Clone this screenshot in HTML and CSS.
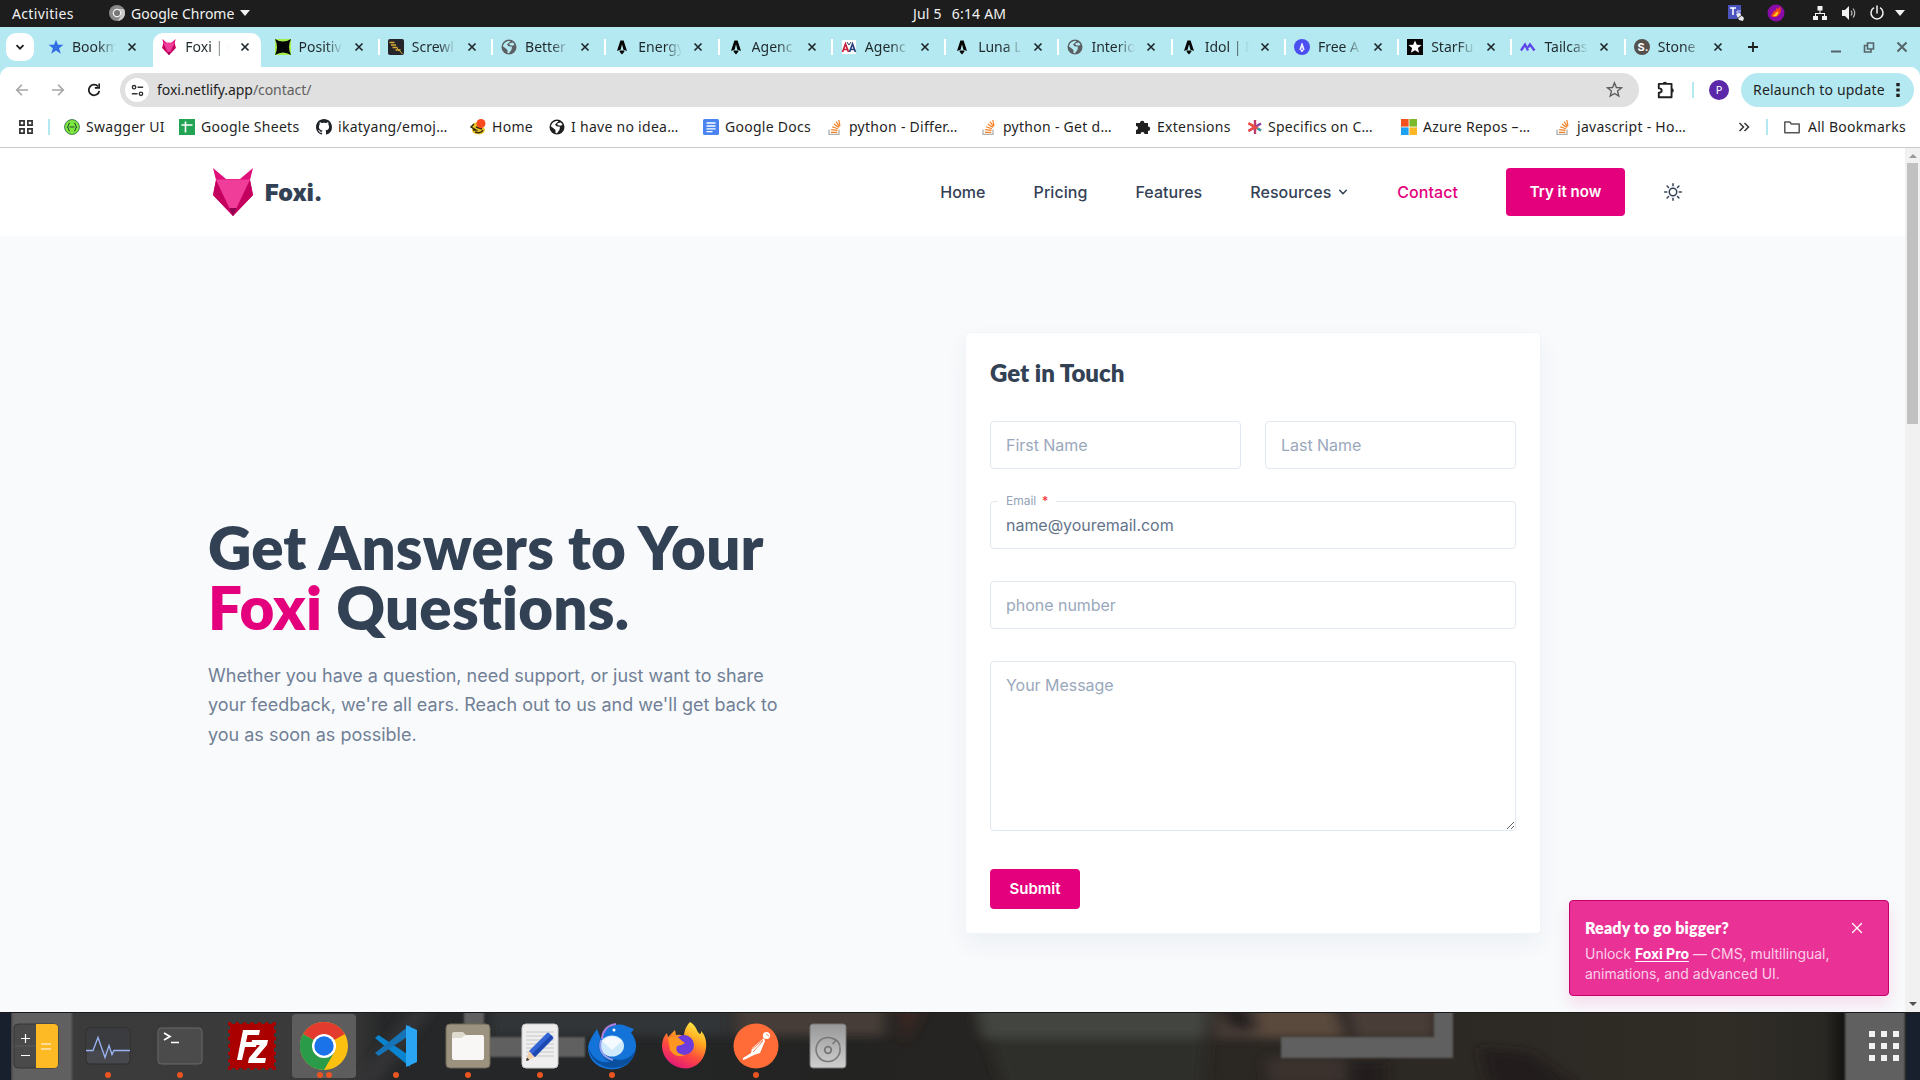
FILE: index.html
```html
<!DOCTYPE html>
<html lang="en">
<head>
<meta charset="utf-8">
<title>Foxi | Contact</title>
<link rel="stylesheet" href="styles.css">
</head>
<body>
<svg class="sprite" aria-hidden="true">
  <symbol id="close" viewBox="0 0 16 16"><path d="M4.500 4.500l7 7M11.500 4.500l-7 7" stroke="currentColor" stroke-width="1.700" fill="none"/></symbol>
  <symbol id="fox" viewBox="0 0 40 48">
    <path d="M0 0l13 11H27L40 0l-3 12 3 15-20 21L0 27l3-15z" fill="#e0107a"/>
    <path d="M3 12L0 27l20 21 20-21-3-15-20 30z" fill="#c4005f"/>
    <path d="M3 11.500h34L23.500 40h-7z" fill="#f03d9a"/>
    <path d="M16.500 40h7L20 48z" fill="#8f0050"/>
  </symbol>
  <symbol id="globe" viewBox="0 0 16 16"><circle cx="8" cy="8" r="7.500" fill="currentColor"/><path d="M9.500 2.200L6 5.500l1.500 1.800 3.500.5-.5 3-2.500 3.500-1.500-.3V11L3.500 8.500 2 7.600C2.200 4.500 5.500 1.500 9.500 2.200z" fill="var(--cut)"/><path d="M8.500 4.200l3.500-.7 1.500 2.300-2 .9-3-.7z" fill="var(--cut)"/></symbol>
  <symbol id="astro" viewBox="0 0 16 16"><path d="M6.400 1.500h3.200L13 12c-1.200-.7-2.600-1.100-3.600-1.300L8 5.200l-1.400 5.500C5.600 10.900 4.200 11.300 3 12z" fill="#050505"/><path d="M5.500 11.500h5c0 2-1.300 2.300-2.500 4-1.200-1.700-2.500-2-2.500-4z" fill="#050505"/></symbol>
  <symbol id="stack" viewBox="0 0 16 16"><path d="M2 10.500v5h10v-5" fill="none" stroke="#b0b0b0" stroke-width="1.300"/><path d="M4 13.300h6.300M4.200 10.600l6.200.7M5 7.800l5.900 1.900M6.800 4.900l5 3.700M9 2.600l3.500 5M11.800 1l1.200 6" stroke="#f48024" stroke-width="1.200" fill="none"/></symbol>
</svg>

<div class="topbar">
  <span class="activities">Activities</span>
  <svg class="app-icon" viewBox="0 0 16 16"><circle cx="8" cy="8" r="8" fill="#8a8a8a"/><path d="M8 4h7a8 8 0 01-6 11.900l3-6z" fill="#c9c9c9"/><circle cx="8" cy="8" r="3.700" fill="#777" stroke="#f2f2f2" stroke-width="1.200"/></svg>
  <span class="app-name">Google Chrome</span>
  <svg class="caret" viewBox="0 0 10 6"><path d="M0 0h10L5 6z" fill="#f2f2f2"/></svg>
  <div class="clock"><span>Jul 5</span><span>6:14 AM</span></div>
  <div class="tray">
    <svg viewBox="0 0 18 18"><path d="M1 1h13v14H1z" fill="#4b53bc"/><path d="M3 4h6M6 4v7" stroke="#fff" stroke-width="1.600"/><path d="M10 7h4M10 7v2h3v3" stroke="#c9ccff" fill="none"/><path d="M9 10l3-1 5 5-1 3-4-1z" fill="#e8e8e8"/><path d="M10 15l5-4" stroke="#333"/></svg>
    <svg viewBox="0 0 18 18"><circle cx="9" cy="9" r="8.500" fill="#8a0ca8"/><path d="M4 12c1-3 2-2 3-6 1 3 2 0 3-3 1 3 1 3 3-1 2 6 0 9-4 11-2 0-4 0-5-1z" fill="#f6441e"/><path d="M6 12c1-2 2-1 3-4 1 1 1 0 2-1 1 4-2 6-5 5z" fill="#ffc91f"/></svg>
    <svg viewBox="0 0 18 18"><path d="M6.500 2h5v4.500h-5zM2 12h5v4H2zM11 12h5v4h-5zM8.500 6h1v3h-1zM4 9h10v1H4zM4 9h1v3H4zM13 9h1v3h-1z" fill="#f2f2f2"/></svg>
    <svg viewBox="0 0 18 18"><path d="M2 6h3l4-4v14l-4-4H2z" fill="#f2f2f2"/><path d="M11 6.500q2 2.500 0 5M13 4.500q3.500 4.500 0 9" stroke="#bbb" fill="none" stroke-width="1.200"/></svg>
    <svg viewBox="0 0 18 18"><path d="M6 3.700a6 6 0 106 0M9 1.500v8" stroke="#f2f2f2" fill="none" stroke-width="1.500"/></svg>
    <svg viewBox="0 0 18 18"><path d="M4 6h10l-5 6z" fill="#f2f2f2"/></svg>
  </div>
</div>

<div class="tabstrip">
  <div class="tabsearch"><svg viewBox="0 0 16 16"><path d="M4.500 6.200L8 9.700l3.500-3.500" fill="none" stroke="#1f1f1f" stroke-width="1.800"/></svg></div>
  <div class="tabs">
    <div class="tab plain"><svg viewBox="0 0 16 16"><path d="M8 .8l2 5h5.500l-4.400 3.500 1.700 5.500L8 11.500l-4.800 3.300 1.700-5.500L.5 5.800H6z" fill="#2f6fe4"/></svg><span>Bookm</span><svg><use href="#close"/></svg></div>
    <div class="tab active"><svg><use href="#fox"/></svg><span>Foxi | C</span><svg><use href="#close"/></svg></div>
    <div class="tab plain"><svg viewBox="0 0 16 16"><path d="M0 0h16v16H0z" fill="#a4ee4b"/><path d="M0 0q8 5 16 0-4 8 0 16-8-5-16 0 4-8 0-16z" fill="#050505"/></svg><span>Positiv</span><svg><use href="#close"/></svg></div>
    <div class="tab"><svg viewBox="0 0 16 16"><rect width="16" height="16" rx="2" fill="#25252b"/><path d="M1.500 3.500h5M3 6h5M4.500 8.500h5M7.500 11h5" stroke="#d9ad35" stroke-width="1.500"/><path d="M9 9l5.500 6" stroke="#d9ad35"/></svg><span>Screwl</span><svg><use href="#close"/></svg></div>
    <div class="tab grey"><svg><use href="#globe"/></svg><span>Better</span><svg><use href="#close"/></svg></div>
    <div class="tab"><svg><use href="#astro"/></svg><span>Energy</span><svg><use href="#close"/></svg></div>
    <div class="tab"><svg><use href="#astro"/></svg><span>Agenc</span><svg><use href="#close"/></svg></div>
    <div class="tab"><svg viewBox="0 0 16 16"><path d="M1 1h14v14H1z" fill="#fff"/><path d="M1.500 13L4.500 5l3 8M3 10.500h3.500" stroke="#c8203a" stroke-width="1.700" fill="none"/><path d="M8.500 13l3-8 3 8M9.500 10.500H13" stroke="#28417c" stroke-width="1.700" fill="none"/><path d="M6 3l2 3 2-3" stroke="#28417c" fill="none"/></svg><span>Agenc</span><svg><use href="#close"/></svg></div>
    <div class="tab"><svg><use href="#astro"/></svg><span>Luna L</span><svg><use href="#close"/></svg></div>
    <div class="tab grey"><svg><use href="#globe"/></svg><span>Interio</span><svg><use href="#close"/></svg></div>
    <div class="tab"><svg><use href="#astro"/></svg><span>Idol | M</span><svg><use href="#close"/></svg></div>
    <div class="tab"><svg viewBox="0 0 16 16"><circle cx="8" cy="8" r="8" fill="#4b4ff0"/><path d="M8 4l2.300 6.500H9.200L8 7l-1.200 3.500H5.700zM6.700 11h2.600L8 13z" fill="#fff" stroke="#fff" stroke-width=".6"/></svg><span>Free A</span><svg><use href="#close"/></svg></div>
    <div class="tab"><svg viewBox="0 0 16 16"><path d="M0 0h16v16H0z" fill="#050505"/><path d="M8 1.500l1.800 4.300 4.700.3-3.600 3 1.200 4.600L8 11.200l-4.100 2.500 1.200-4.600-3.600-3 4.700-.3z" fill="#fff"/></svg><span>StarFu</span><svg><use href="#close"/></svg></div>
    <div class="tab"><svg viewBox="0 0 16 16"><path d="M1 11.500L5 5.500l3 6M8 8.500l2-3 4.500 6" stroke="#5d45e8" stroke-width="2.300" fill="none"/></svg><span>Tailcas</span><svg><use href="#close"/></svg></div>
    <div class="tab"><svg viewBox="0 0 16 16"><circle cx="8" cy="8" r="8" fill="#55504c"/><text x="3.600" y="12" class="s-mark">S.</text></svg><span>Stone</span><svg><use href="#close"/></svg></div>
  </div>
  <div class="newtab"><svg viewBox="0 0 16 16"><path d="M8 3v10M3 8h10" stroke="#1f1f1f" stroke-width="1.800"/></svg></div>
  <div class="wincontrols">
    <svg viewBox="0 0 16 16"><path d="M3 12.500h10" stroke="#56646a" stroke-width="2"/></svg>
    <svg viewBox="0 0 16 16"><path d="M6.500 4h6v6h-6zM6 6.500H3.500V13H10v-2.500" fill="none" stroke="#56646a" stroke-width="1.600"/></svg>
    <svg viewBox="0 0 16 16"><path d="M3.500 3.500l9 9M12.500 3.500l-9 9" stroke="#56646a" stroke-width="2"/></svg>
  </div>
</div>

<div class="toolbar">
  <div class="navbtns">
    <svg viewBox="0 0 16 16"><path d="M14 8H3M8 2.700L2.700 8 8 13.300" stroke="#a5a5a5" stroke-width="1.600" fill="none"/></svg>
    <svg viewBox="0 0 16 16"><path d="M2 8h11M8 2.700L13.300 8 8 13.300" stroke="#a5a5a5" stroke-width="1.600" fill="none"/></svg>
    <svg viewBox="0 0 16 16"><path d="M13.300 8.800A5.300 5.300 0 1112 4.400" stroke="#1f1f1f" stroke-width="1.800" fill="none"/><path d="M14 1.500v5.200H8.800V5.100h3.600V1.500z" fill="#1f1f1f"/></svg>
  </div>
  <div class="omnibox">
    <div class="siteinfo"><svg viewBox="0 0 16 16"><path d="M8 4.500h6M2 11.500h6" stroke="#333" stroke-width="1.600"/><circle cx="4.300" cy="4.500" r="1.800" fill="none" stroke="#333" stroke-width="1.500"/><circle cx="11.700" cy="11.500" r="1.800" fill="none" stroke="#333" stroke-width="1.500"/></svg></div>
    <span class="url">foxi.netlify.app<i>/contact/</i></span>
    <svg class="bm-star" viewBox="0 0 16 16"><path d="M8 1.800l1.800 4.300 4.700.4-3.600 3 1.100 4.600L8 11.700l-4 2.400 1.100-4.600-3.600-3 4.700-.4z" fill="none" stroke="#5c5c5c" stroke-width="1.300"/></svg>
  </div>
  <svg class="puzzle" viewBox="0 0 18 18"><path d="M2.500 3.500H14v12H2.500v-4c3.500 0 3.500-4 0-4z" fill="none" stroke="#1f1f1f" stroke-width="1.700" stroke-linejoin="round"/><path d="M6 3.500a2 2 0 014 0zM14 7.500a2 2 0 010 4z" fill="#1f1f1f"/></svg>
  <span class="divider"></span>
  <span class="avatar">P</span>
  <div class="relaunch"><span>Relaunch to update</span><svg viewBox="0 0 4 16"><path d="M.3 1h3.400v3.200H.3zM.3 6.400h3.400v3.200H.3zM.3 11.800h3.400V15H.3z" fill="#1f1f1f"/></svg></div>
</div>

<div class="bookmarks">
  <svg class="apps" viewBox="0 0 16 16"><path d="M1.900 1.900h4.200v4.200H1.900zM9.900 1.900h4.200v4.200H9.900zM1.900 9.900h4.200v4.200H1.900zM9.900 9.900h4.200v4.200H9.900z" fill="none" stroke="#333" stroke-width="1.700"/></svg>
  <span class="divider"></span>
  <div class="bm-list">
    <div class="bm"><svg viewBox="0 0 16 16"><circle cx="8" cy="8" r="7.400" fill="#7ee83c" stroke="#3f7a55"/><path d="M6 4q-1.500 0-1.500 2T3 8q1.500 0 1.500 2T6 12M10 4q1.500 0 1.500 2T13 8q-1.500 0-1.500 2T10 12M5.500 8h5" fill="none" stroke="#234b38"/></svg><span>Swagger UI</span></div>
    <div class="bm"><svg viewBox="0 0 16 16"><path d="M0 0h16v16H0z" fill="#23a455"/><path d="M2.500 6h11M6.500 2.500v11" stroke="#fff" stroke-width="1.600"/></svg><span>Google Sheets</span></div>
    <div class="bm"><svg viewBox="0 0 16 16"><path fill="#1f2328" d="M8 0C3.580 0 0 3.580 0 8c0 3.540 2.290 6.530 5.470 7.590.4.070.55-.17.55-.38 0-.19-.01-.82-.01-1.490-2.010.37-2.530-.49-2.690-.94-.09-.23-.48-.94-.82-1.130-.28-.15-.68-.52-.01-.53.63-.01 1.080.58 1.230.82.720 1.210 1.870.87 2.330.66.070-.52.28-.87.51-1.070-1.780-.2-3.640-.89-3.640-3.950 0-.87.31-1.590.82-2.150-.08-.2-.36-1.020.08-2.120 0 0 .67-.21 2.200.82.640-.18 1.320-.27 2-.27s1.360.09 2 .27c1.530-1.040 2.200-.82 2.200-.82.440 1.100.16 1.920.08 2.120.51.560.82 1.270.82 2.150 0 3.070-1.870 3.750-3.650 3.950.29.250.54.730.54 1.480 0 1.070-.01 1.930-.01 2.200 0 .21.15.46.55.38A8.010 8.010 0 0016 8c0-4.420-3.580-8-8-8z"/></svg><span>ikatyang/emoj…</span></div>
    <div class="bm"><svg viewBox="0 0 16 16"><path d="M2 6Q6 1 10 5l5 5q0 5-6 5.500Q1 15 2 10z" fill="#e9c62a"/><path d="M4 5L1 8l5 3H3M5 13q6 2 8-2M6 8l6 2" fill="none" stroke="#33290e" stroke-width="1.400"/><circle cx="11" cy="4.500" r="4.500" fill="#fb4b1e"/></svg><span>Home</span></div>
    <div class="bm dark"><svg><use href="#globe"/></svg><span>I have no idea…</span></div>
    <div class="bm"><svg viewBox="0 0 16 16"><rect width="16" height="16" rx="1.500" fill="#4b84f1"/><path d="M3.500 4h9M3.500 7h9M3.500 9.900h9M3.500 12.600h6" stroke="#fff" stroke-width="1.400"/></svg><span>Google Docs</span></div>
    <div class="bm"><svg><use href="#stack"/></svg><span>python - Differ…</span></div>
    <div class="bm"><svg><use href="#stack"/></svg><span>python - Get d…</span></div>
    <div class="bm"><svg viewBox="0 0 16 16"><path d="M1 4h4a2.200 2.200 0 114.400 0H13v3.600a2.200 2.200 0 110 4.400v3H9.500a2 2 0 10-4 0H1v-4a2 2 0 100-4z" fill="#1f1f1f"/></svg><span>Extensions</span></div>
    <div class="bm"><svg viewBox="0 0 16 16"><path d="M9 1v14" stroke="#c23a6b" stroke-width="2.400"/><path d="M2.500 4.200L9 8 15 11.500" stroke="#e8562b" stroke-width="2.400"/><path d="M15 4.500L9 8l-6.500 4" stroke="#8f3fa0" stroke-width="2.400"/><path d="M2.500 4.200L9 8l-6.500 4" stroke="#ee4b45" stroke-width="2.400" fill="none"/><path d="M11.500 9.500L15 11.500" stroke="#28a6b5" stroke-width="2.400"/></svg><span>Specifics on C…</span></div>
    <div class="bm"><svg viewBox="0 0 16 16"><path d="M0 0h7.600v7.600H0z" fill="#f4511e"/><path d="M8.400 0H16v7.600H8.400z" fill="#7cb928"/><path d="M0 8.400h7.600V16H0z" fill="#1da1f2"/><path d="M8.400 8.400H16V16H8.400z" fill="#fdb827"/></svg><span>Azure Repos –…</span></div>
    <div class="bm"><svg><use href="#stack"/></svg><span>javascript - Ho…</span></div>
  </div>
  <svg class="more" viewBox="0 0 12 12"><path d="M1.500 2l4 4-4 4M6.500 2l4 4-4 4" fill="none" stroke="#333" stroke-width="1.500"/></svg>
  <span class="divider"></span>
  <svg class="folder" viewBox="0 0 16 16"><path d="M.8 3h5l1.600 2h7.800v8.700H.8z" fill="none" stroke="#555" stroke-width="1.500" stroke-linejoin="round"/></svg>
  <span class="all">All Bookmarks</span>
</div>

<div class="viewport">
  <main class="page">
    <header class="site-header">
      <a class="brand"><svg><use href="#fox"/></svg><span>Foxi.</span></a>
      <nav class="nav">
        <a>Home</a><a>Pricing</a><a>Features</a>
        <a class="has-menu">Resources<svg viewBox="0 0 12 12"><path d="M2.700 4.300L6 7.700l3.300-3.400" fill="none" stroke="#334155" stroke-width="1.500" stroke-linecap="round" stroke-linejoin="round"/></svg></a>
        <a class="current">Contact</a>
      </nav>
      <a class="btn try">Try it now</a>
      <svg class="sun" viewBox="0 0 24 24"><circle cx="12" cy="12" r="4.500"/><path d="M12 2v2.500M12 19.500V22M2 12h2.500M19.500 12H22M4.900 4.900l1.700 1.700M17.400 17.400l1.700 1.700M4.900 19.100l1.700-1.700M17.400 6.600l1.700-1.700"/></svg>
    </header>
    <section class="hero">
      <div class="intro">
        <h1>Get Answers to Your <em>Foxi</em> <b>Questions.</b></h1>
        <p>Whether you have a question, need support, or just want to share your feedback, we're all ears. Reach out to us and we'll get back to you as soon as possible.</p>
      </div>
      <form class="card">
        <h2>Get in Touch</h2>
        <div class="fields">
          <div class="names"><input placeholder="First Name"><input placeholder="Last Name"></div>
          <div class="email"><label>Email <b>*</b></label><input value="name@youremail.com"></div>
          <input placeholder="phone number">
          <textarea placeholder="Your Message"></textarea>
        </div>
        <button type="button" class="btn">Submit</button>
      </form>
    </section>
    <aside class="toast">
      <h3>Ready to go bigger?</h3>
      <p>Unlock <u>Foxi Pro</u> — CMS, multilingual, animations, and advanced UI.</p>
      <svg viewBox="0 0 12 12"><path d="M1.500 1.500l9 9M10.500 1.500l-9 9" stroke="#fff" stroke-width="1.300" stroke-linecap="round"/></svg>
    </aside>
  </main>
  <div class="scrollbar">
    <svg viewBox="0 0 8 4"><path d="M0 4h8L4 0z" fill="#9a9a9a"/></svg>
    <span></span>
    <svg viewBox="0 0 8 4"><path d="M0 0h8L4 4z" fill="#505050"/></svg>
  </div>
</div>

<div class="dock">
  <svg class="wallpaper" viewBox="0 0 1920 68" preserveAspectRatio="none">
    <defs>
      <filter id="soft" x="-5%" y="-50%" width="110%" height="200%"><feGaussianBlur stdDeviation="7 5"/></filter>
      <filter id="edge" x="-5%" y="-20%" width="110%" height="140%"><feGaussianBlur stdDeviation="1"/></filter>
      <linearGradient id="base"><stop offset="0" stop-color="#3b3b3b"/><stop offset=".18" stop-color="#3a3a3a"/><stop offset=".2" stop-color="#262728"/><stop offset=".3" stop-color="#242627"/><stop offset=".44" stop-color="#232322"/><stop offset=".6" stop-color="#2a2622"/><stop offset=".75" stop-color="#2c2823"/><stop offset=".9" stop-color="#302d27"/><stop offset=".95" stop-color="#2a2823"/><stop offset=".96" stop-color="#141412"/></linearGradient>
    </defs>
    <path d="M0 0h1920v68H0z" fill="url(#base)"/>
    <g filter="url(#soft)">
      <path d="M490 -8h240v32H490z" fill="#323538"/>
      <path d="M735 -8h150v32H735z" fill="#463c38"/>
      <path d="M360 68l55-76h20l-55 76z" fill="#353637"/>
      <path d="M895 -8h30l-20 40z" fill="#3a2621"/>
      <path d="M975 -8h235l-8 84H1005z" fill="#2e2f2b"/>
      <path d="M975 -8h235l-5 34H982z" fill="#424440"/>
      <path d="M1215 -8h220v34h-220z" fill="#483e38"/>
      <path d="M1260 -8h70l15 34h-90z" fill="#5a483d"/>
      <path d="M1215 -8h30l15 25-30 0zM1335 -8h12l8 34h-10z" fill="#252220"/>
      <path d="M1265 46h80v26h-75z" fill="#3b322d"/>
      <path d="M1350 50h35v26h-35zM1480 36l50 5 50 35h-90z" fill="#201e1d"/>
    </g>
    <g filter="url(#edge)" fill="#606060">
      <path d="M12 -4h60v76H12zM464 -4h20v29h101v20H464zM1281 25h153V-4h19v50h-172zM1845 -4h60v76h-60z"/>
    </g>
    <path d="M0 0h11v68H0zM1906 0h14v68h-14z" fill="#17202c"/>
    <path d="M0 .5h1920" stroke="#1a1a1a"/>
  </svg>
  <div class="launchers">
    <div class="app"><svg viewBox="0 0 48 48"><rect x="2" y="2" width="44" height="44" rx="4" fill="#4a4a4a" stroke="#343434"/><path d="M24 2h18q4 0 4 4v36q0 4-4 4H24z" fill="#fdba25"/><path d="M2.500 24H24" stroke="#5a5a5a"/><path d="M9 16.500h9M13.500 12v9M9 33.500h9M29 22h10M29 27h10" stroke="#fff" stroke-width="1.200"/></svg></div>
    <div class="app one"><svg viewBox="0 0 48 48"><rect x="2" y="6" width="44" height="36" rx="3.500" fill="#47484d" stroke="#2c2c2c"/><path d="M3 7h42v21H3z" fill="#3b3c40"/><path d="M2 28.500h7l5-13 7 20 4-12 3 9 2-4h16" fill="none" stroke="#9ab4f4" stroke-width="1.300"/></svg></div>
    <div class="app one"><svg viewBox="0 0 48 48"><rect x="2" y="6" width="44" height="36" rx="3.500" fill="#4b4b4b" stroke="#6a6a6a"/><path d="M8 11l6 3.500L8 18M15 20.500h8" fill="none" stroke="#fff" stroke-width="1.700"/></svg></div>
    <div class="app"><svg viewBox="0 0 48 48"><path d="M2 2h44v44H2z" fill="#ab0000"/><path d="M1.800 1.800h44.400v44.400H1.800z" fill="none" stroke="#ab0000" stroke-width="4" stroke-dasharray="0 7.400" stroke-linecap="round"/><path d="M9 38L15 8h17l-1 5H19.500L18 20h11l-1 5H17l-3 13zM24 18h16l-1 5-11 13h10l-1 5H20l1-5 11-13h-9z" fill="#fff"/></svg></div>
    <div class="app two focused"><svg viewBox="0 0 48 48"><circle cx="24" cy="24" r="24" fill="#fcc010"/><path d="M24 24L3.200 12A24 24 0 0144.800 12z" fill="#e33b2e"/><path d="M24 24L3.200 12A24 24 0 0024 48l10.400-18z" fill="#2a9b48"/><circle cx="24" cy="24" r="12" fill="#fff"/><circle cx="24" cy="24" r="9.700" fill="#1a73e8"/></svg></div>
    <div class="app one"><svg viewBox="0 0 48 48"><path d="M3 17l3.500-3L38 35v11L3 17z" fill="#0a84cf" transform="translate(0 -1)"/><path d="M3 31l3.500 3L38 13V3L3 31z" fill="#1573b6"/><path d="M34 3l11 5v32l-11 5z" fill="#29a5f4"/></svg></div>
    <div class="app one"><svg viewBox="0 0 48 48"><rect x="2" y="2" width="44" height="44" rx="4" fill="#9b9380" stroke="#6f6959"/><path d="M8 12q0-2 2-2h9l4 4h15q2 0 2 2v8H8z" fill="#dedad0"/><path d="M8 16h9l5-3h16q2 0 2 2v21q0 2-2 2H10q-2 0-2-2z" fill="#f8f7f5"/></svg></div>
    <div class="app one"><svg viewBox="0 0 48 48"><rect x="6" y="2" width="36" height="44" rx="4" fill="#eeeeee" stroke="#c8c8c8"/><path d="M10 10h28M10 14h28M10 18h28M10 22h28M10 26h28M10 30h28M10 34h28" stroke="#bdbdbd" stroke-width=".8"/><path d="M10 39l3-10 6 6z" fill="#f2cfa5"/><path d="M13 29l18-18q1-1 2 0l4 4q1 1 0 2L19 35z" fill="#3465d6"/><path d="M16 32l19-19 2 3-18 19z" fill="#1d48b0"/><path d="M10 39l1-3.500 2.500 2.500z" fill="#333"/></svg></div>
    <div class="app one"><svg viewBox="0 0 48 48"><path d="M9 7C2 17 0 22 0 27c2 26 45 29 48-2 .3-7-3-12-5-14l3-4-8-3C29 0 17 4 13 17z" fill="#1373d8"/><path d="M0 24c2 26 43 31 48 3-6 15-32 17-36-10C8 26 14 36 22 40 11 42 3 35 0 24z" fill="#0b4f9f"/><path d="M14 17Q15 4 28 2" stroke="#ac80e0" stroke-width="2" fill="none"/><ellipse cx="24" cy="24" rx="12" ry="10.500" fill="#cfe9fd"/><path d="M14 19l10 9 10-9q-10-9-20 0z" fill="#f4faff"/><path d="M13 18q-4 15 12 20" stroke="#8d9ff0" stroke-width="2" fill="none"/><circle cx="26" cy="8" r="1.500" fill="#fff"/></svg></div>
    <div class="app"><svg viewBox="0 0 48 48"><defs><linearGradient id="fire" x1=".8" y1="0" x2=".3" y2="1"><stop offset="0" stop-color="#fff14a"/><stop offset=".35" stop-color="#ffa41f"/><stop offset=".65" stop-color="#ff4a3f"/><stop offset="1" stop-color="#e0157d"/></linearGradient></defs><path d="M30 0c8 5 6 10 10 12 1 0 1-2 1-3 6 6 6 15 4 22C37 56 4 48 2 25c0-8 3-12 5-14l1 4 7-7 1 5q6-1 8 2c0-7 3-12 6-15z" fill="url(#fire)"/><circle cx="24" cy="23" r="10" fill="#6c3ddc"/><path d="M8 16q8-4 13 2l4 3q-4 3-8 3-3 8 8 9-9 4-15-5z" fill="#ff9620"/></svg></div>
    <div class="app one"><svg viewBox="0 0 48 48"><circle cx="24" cy="24" r="22.500" fill="#ff6c37"/><circle cx="34.500" cy="13.500" r="3.600" fill="#fff"/><path d="M32 16l-12 10-1 5-8 5 0 2 3-1 8-4 6-2 5-12z" fill="#fff"/><path d="M20 27l11-9M21 30l10-11M34 12l3 2" stroke="#ff6c37" stroke-width=".8"/></svg></div>
    <div class="app"><svg viewBox="0 0 48 48"><defs><linearGradient id="disk" x2="0" y2="1"><stop offset="0" stop-color="#989898"/><stop offset="1" stop-color="#cfcfcf"/></linearGradient></defs><rect x="6" y="2" width="36" height="44" rx="3" fill="url(#disk)" stroke="#777"/><path d="M32 18.500a12 12 0 103.800 6.500M32 18.500l-3.500 3.500M29 16.500q6 2 7 8" fill="none" stroke="#777" stroke-width="1.600"/><circle cx="24" cy="28" r="3.300" fill="none" stroke="#777" stroke-width="1.800"/></svg></div>
  </div>
  <svg class="grid-btn" viewBox="0 0 30 30"><path d="M0 0h6v6H0zM12 0h6v6h-6zM24 0h6v6h-6zM0 12h6v6H0zM12 12h6v6h-6zM24 12h6v6h-6zM0 24h6v6H0zM12 24h6v6h-6zM24 24h6v6h-6z" fill="#f2f2f2"/></svg>
</div>
</body>
</html>
```
FILE: styles.css
```css
* { box-sizing: border-box; }
body { margin: 0; width: 1920px; height: 1080px; overflow: hidden; display: flex; flex-direction: column; font-family: "Noto Sans", "Open Sans", sans-serif; font-size: 14px; color: #1f1f1f; background: #fff; }
svg { display: block; flex: none; }
.sprite { display: none; }

/* desktop top bar */
.topbar { position: relative; height: 27px; flex: none; display: flex; align-items: center; padding: 0 0 1px 12px; background: #1d1d1d; color: #f2f2f2; white-space: nowrap; }
.activities { width: 97px; letter-spacing: .35px; }
.app-icon { width: 16px; height: 16px; margin-right: 6px; }
.app-name { width: 109px; }
.caret { width: 10px; height: 6px; }
.clock { position: absolute; left: 913px; display: flex; gap: 10px; letter-spacing: .2px; }
.tray { margin-left: auto; display: grid; grid-template-columns: 40px 44px 29px 28px 23px 29px; }
.tray svg { width: 18px; height: 18px; }

/* browser tabs */
.tabstrip { height: 40px; flex: none; display: flex; align-items: center; background: #b5e9f1; padding-left: 6px; }
.tabsearch { width: 28px; height: 28px; margin-right: 4px; border-radius: 10px; background: #fff; display: grid; place-items: center; }
.tabsearch svg { width: 16px; height: 16px; }
.tabs { display: flex; height: 40px; }
.tab { --cut: #b5e9f1; position: relative; width: 113.27px; height: 40px; display: flex; align-items: center; padding: 0 0 1px 10px; }
.tab::before { content: ""; position: absolute; left: 0; top: 12px; width: 2px; height: 16px; background: #fff; }
.tab.plain::before, .tab.active::before { display: none; }
.tab.grey { color: #5a6064; }
.tab svg { width: 16px; height: 16px; color: inherit; }
.tab span { width: 44px; margin: 0 8px; overflow: hidden; white-space: nowrap; color: #1f2a2d; -webkit-mask-image: linear-gradient(90deg, #000 60%, transparent); mask-image: linear-gradient(90deg, #000 60%, transparent); }
.tab svg:last-child { color: #1f2a2d; }
.tab.active { z-index: 0; }
.tab.active::after { content: ""; position: absolute; z-index: -1; left: 2px; top: 6px; width: 108px; height: 34px; background: #fff; border-radius: 10px 10px 0 0; }
.s-mark { font: 700 11px "Inter", sans-serif; fill: #fff; }
.newtab { padding: 0 0 1px 8px; }
.newtab svg, .wincontrols svg { width: 16px; height: 16px; }
.wincontrols { margin-left: auto; display: flex; gap: 17px; padding: 0 10px 1px 0; }

/* address row */
.toolbar { height: 46px; flex: none; display: flex; align-items: center; padding: 0 6px 0 14px; background: #fff; border-radius: 10px 10px 0 0; box-shadow: 0 -10px 0 #b5e9f1; clip-path: inset(0); background: linear-gradient(#fff, #fff); }
.navbtns { display: flex; gap: 20px; margin: 0 18px 1px 0; }
.navbtns svg { width: 16px; height: 16px; }
.omnibox { width: 1519px; height: 34px; border-radius: 17px; background: #e0e0e0; display: flex; align-items: center; padding: 0 16px 0 5px; }
.siteinfo { width: 24px; height: 24px; border-radius: 50%; background: #fff; display: grid; place-items: center; margin-right: 8px; }
.siteinfo svg { width: 15px; height: 15px; }
.url { white-space: nowrap; padding-bottom: 2px; letter-spacing: -.06px; }
.url i { font-style: normal; color: #5f5f5f; }
.bm-star { width: 17px; height: 17px; margin: 0 0 1px auto; }
.puzzle { width: 20px; height: 20px; margin: 0 16px 1px 17px; }
.divider { width: 2px; height: 16px; background: #b5e9f1; flex: none; }
.avatar { width: 20px; height: 20px; border-radius: 50%; background: #5a28a8; color: #fff; font-size: 11px; line-height: 20px; text-align: center; margin: 0 12px 1px 15px; }
.relaunch { flex: 1; height: 34px; border-radius: 17px; background: #b5e9f1; display: flex; align-items: center; justify-content: space-between; padding: 0 14px 1px 12px; white-space: nowrap; letter-spacing: .2px; }
.relaunch svg { width: 4px; height: 16px; }

/* bookmarks row */
.bookmarks { height: 35px; flex: none; display: flex; align-items: center; padding: 0 0 7px 18px; border-bottom: 1px solid #c9c9c9; letter-spacing: .28px; }
.bm { --cut: #fff; display: flex; align-items: center; gap: 6px; white-space: nowrap; }
.bm svg, .apps, .folder { width: 16px; height: 16px; }
.apps { margin-right: 14px; }
.bm-list { display: grid; grid-template-columns: 115px 137px 154px 79px 154px 124px 154px 154px 111px 155px 154px 183px; margin-left: 14px; }
.more { width: 12px; height: 12px; margin-right: 16px; }
.folder { margin: 0 8px 0 16px; }
.all { white-space: nowrap; }

/* web page */
.viewport { height: 864px; flex: none; display: flex; }
.page { position: relative; width: 1905px; background: #f8fafc; font-family: "Inter", sans-serif; display: flex; flex-direction: column; }
.site-header { height: 88px; padding: 0 208px; display: flex; align-items: center; background: #fff; color: #334155; font-size: 16px; font-weight: 500; }
.brand { display: flex; align-items: center; gap: 12px; margin: 0 auto 0 5px; font: 900 23.500px "Inter", sans-serif; }
.brand svg { width: 40px; height: 48px; }
.nav { display: flex; gap: 48px; letter-spacing: .05px; }
.has-menu { display: flex; align-items: center; gap: 6px; }
.has-menu svg { width: 12px; height: 12px; }
.nav .current { color: #e4007c; }
.btn { display: grid; place-items: center; background: #e4007c; color: #fff; border: 0; border-radius: 4px; font: 600 15px "Inter", sans-serif; padding: 0 0 1px; }
.try { width: 119px; height: 48px; margin: 0 38px 0 48px; }
.sun { width: 20px; height: 20px; margin-right: 14px; fill: none; stroke: #334155; stroke-width: 1.8; stroke-linecap: round; }
.hero { display: flex; align-items: center; padding: 97px 0 0 208px; }
.intro { width: 758px; }
.intro h1 { margin: 0 0 24px; width: 600px; font: 800 60px/60px "Lato", sans-serif; letter-spacing: .2px; font-variant-ligatures: none; color: #334155; }
.intro h1 em { font-style: normal; color: #e4007c; }
.intro h1 b { font-weight: inherit; }
.intro p { margin: 0; width: 580px; font-size: 18px; line-height: 29.25px; color: #718096; }
.card { width: 574px; height: 600px; padding: 24px; background: #fff; border-radius: 4px; box-shadow: 0 0 0 1px #f1f5f9, 0 10px 25px rgba(51, 65, 85, .06); }
.card h2 { margin: 0; height: 64px; font: 800 24px/32px "Lato", sans-serif; color: #334155; }
.fields { display: flex; flex-direction: column; gap: 32px; margin-bottom: 38px; }
.names { display: grid; grid-template-columns: 1fr 1fr; gap: 24px; }
input, textarea { display: block; width: 100%; height: 48px; border: 1px solid #e2e8f0; border-radius: 4px; padding: 0 15px; font: 16px/24px "Inter", sans-serif; letter-spacing: -.03px; color: #64748b; background: #fff; outline: 0; }
textarea { height: 170px; padding-top: 11px; }
::placeholder { color: #9aa8bc; opacity: 1; }
.email { position: relative; }
.email label { position: absolute; left: 8px; top: -9px; padding: 0 8px; height: 18px; line-height: 18px; font-size: 12px; color: #94a3b8; background: #fff; white-space: pre; }
.email label b { color: #ef4444; padding-left: 2px; }
.card .btn { width: 90px; height: 40px; }
.toast { position: absolute; left: 1569px; top: 752px; width: 320px; height: 96px; padding: 15px; background: #e93196; border: 1px solid #c4006c; border-radius: 4px; box-shadow: 0 8px 16px rgba(228, 0, 124, .12); color: #fbd0e7; font-size: 14px; line-height: 20px; letter-spacing: -.03px; }
.toast h3 { margin: 1px 0 5px; font: 800 16px/22px "Lato", sans-serif; letter-spacing: .15px; color: #fff; }
.toast p { margin: 0; }
.toast u { font-weight: 700; color: #fff; text-underline-offset: 2px; }
.toast svg { position: absolute; right: 25px; top: 21px; width: 12px; height: 12px; }
.scrollbar { width: 15px; background: #f1f1f1; display: flex; flex-direction: column; align-items: center; padding: 6px 0; }
.scrollbar svg { width: 8px; height: 4px; }
.scrollbar span { width: 11px; height: 261px; margin: 5px 0 auto; background: #c1c1c1; }

/* dock */
.dock { position: relative; height: 68px; flex: none; display: flex; justify-content: space-between; }
.wallpaper { position: absolute; inset: 0; width: 1920px; height: 68px; }
.launchers { position: relative; display: flex; gap: 8px; padding: 2px 0 0 4px; }
.app { position: relative; width: 64px; height: 64px; border-radius: 4px; padding: 8px; }
.app svg { width: 48px; height: 48px; }
.focused { background: #5d5d5d; }
.one::after, .two::after { content: ""; position: absolute; left: 29px; top: 58px; width: 6px; height: 6px; border-radius: 50%; background: #e95420; }
.two::after { left: 25px; box-shadow: 9px 0 #e95420; }
.grid-btn { position: relative; width: 30px; height: 30px; margin: 19px 21px 0 0; }
```
